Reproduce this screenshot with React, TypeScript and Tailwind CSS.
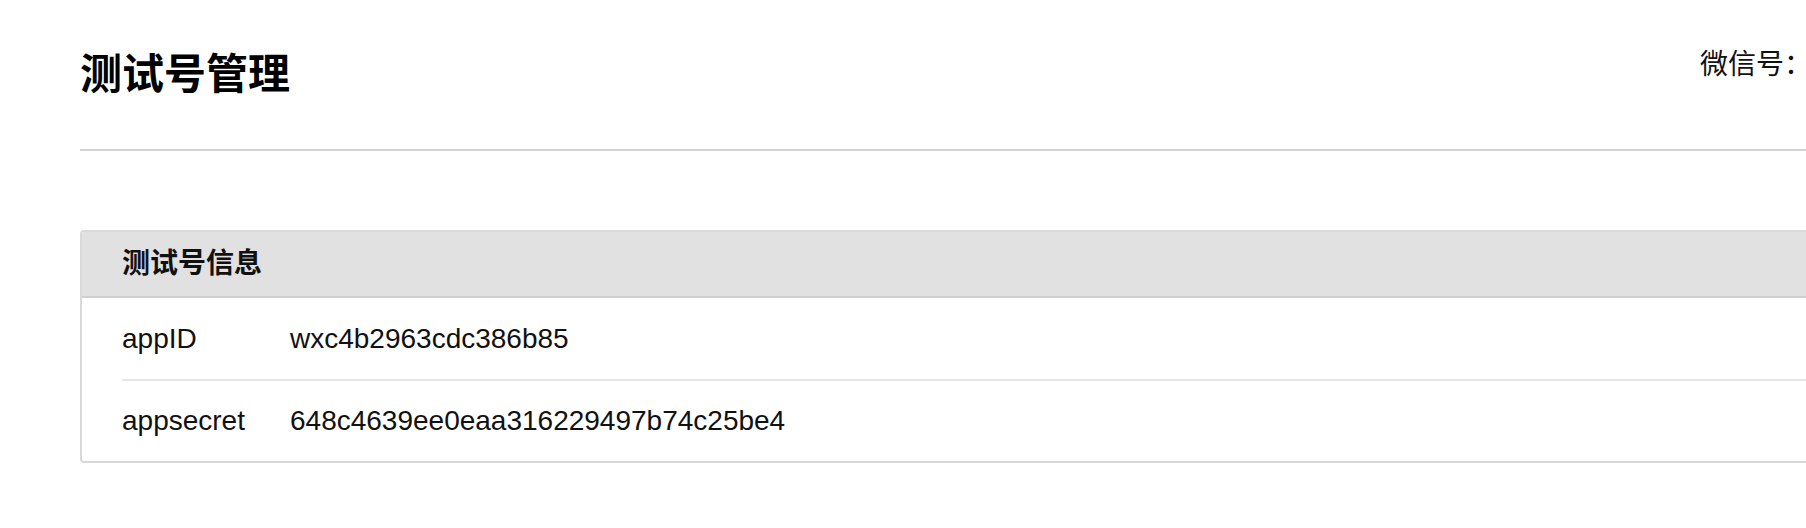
import React from "react";

const rows = [
  { label: "appID", value: "wxc4b2963cdc386b85" },
  { label: "appsecret", value: "648c4639ee0eaa316229497b74c25be4" },
];

export default function App() {
  return (
    <div className="w-full h-[528px] overflow-hidden bg-white text-black font-['Liberation_Sans','Noto_Sans_CJK_SC',sans-serif]">
      <div className="ml-[80px] w-[1820px]">
        {/* page header */}
        <div className="flex items-start justify-between pt-[52px] pb-[53px] border-b-2 border-[#d3d3d3]">
          <h1 className="mt-[2px] text-[42px] leading-[42px] font-bold">测试号管理</h1>
          <div className="w-[200px] shrink-0 -mt-[1px] whitespace-nowrap text-[28px] leading-[28px] text-[#111]">
            微信号：
          </div>
        </div>

        {/* info panel */}
        <div className="mt-[79px] border-2 border-[#d9d9d9] rounded-[4px] overflow-hidden">
          <div className="h-[66px] flex items-center pl-[40px] bg-[#e1e1e1] border-b-2 border-[#cfcfcf]">
            <span className="text-[28px] font-bold text-[#111]">测试号信息</span>
          </div>
          {rows.map((row, i) => (
            <div
              key={row.label}
              className={
                i < rows.length - 1
                  ? "ml-[40px] h-[83px] flex items-center border-b-2 border-[#e6e6e6]"
                  : "ml-[40px] h-[80px] flex items-center"
              }
            >
              <span className="w-[168px] shrink-0 text-[28px] text-[#111]">{row.label}</span>
              <span className="text-[28px] text-[#111]">{row.value}</span>
            </div>
          ))}
        </div>
      </div>
    </div>
  );
}
